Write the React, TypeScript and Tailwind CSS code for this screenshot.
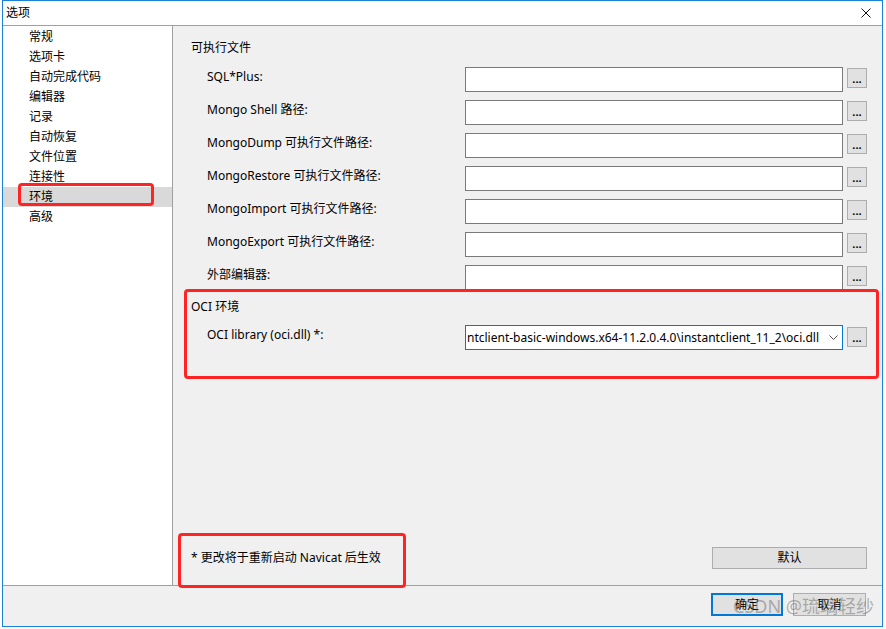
import React from "react";

const labels = [
  "SQL*Plus:",
  "Mongo Shell 路径:",
  "MongoDump 可执行文件路径:",
  "MongoRestore 可执行文件路径:",
  "MongoImport 可执行文件路径:",
  "MongoExport 可执行文件路径:",
  "外部编辑器:",
];

const nav = ["常规", "选项卡", "自动完成代码", "编辑器", "记录", "自动恢复", "文件位置", "连接性", "环境", "高级"];

function DotsButton({ top }: { top: string }) {
  return (
    <div
      className={`w-[20px] h-[20px] ${top} bg-[#e1e1e1] border border-[#adadad] flex items-end justify-center pb-[3px] text-[11px] leading-none font-bold text-black`}
    >
      ...
    </div>
  );
}

export default function App() {
  return (
    <div className="relative w-[886px] h-[629px] bg-white pl-[2px] pr-[3px] pb-[2px] overflow-hidden font-['Noto_Sans','Noto_Sans_CJK_SC',sans-serif] text-[12px] text-black">
      <div className="h-full border border-[#1883d7] flex flex-col">
        {/* title bar */}
        <div className="h-[24px] bg-white flex items-center justify-between border-b border-[#a0a0a0] box-content">
          <span className="pl-[3px] leading-4">选项</span>
          <svg width="10" height="10" viewBox="0 0 10 10" className="mr-[11px]">
            <path d="M0.5 0.5 L9.5 9.5 M9.5 0.5 L0.5 9.5" stroke="#111" strokeWidth="1" />
          </svg>
        </div>

        {/* main */}
        <div className="flex-1 flex border-b border-[#a0a0a0] min-h-0">
          <div className="w-[170px] bg-white border-r border-[#a0a0a0] pt-[1px]">
            {nav.map((n) => (
              <div
                key={n}
                className={`h-[20px] leading-[20px] pl-[26px] ${n === "环境" ? "bg-[#d9d9d9]" : ""}`}
              >
                {n}
              </div>
            ))}
          </div>

          <div className="flex-1 bg-[#f0f0f0] flex flex-col pt-[14px] pr-[15px] pb-[16px]">
            <div className="pl-[18px] h-4 leading-4">可执行文件</div>
            <div className="mt-[11px] flex flex-col">
              {labels.map((l) => (
                <div key={l} className="h-[33px] flex items-start pl-[34px]">
                  <div className="w-[258px] mt-[2px] h-4 leading-4 whitespace-nowrap">{l}</div>
                  <div className="w-[378px] h-[25px] bg-white border border-[#7a7a7a]" />
                  <div className="ml-[4px]">
                    <DotsButton top="mt-[1px]" />
                  </div>
                </div>
              ))}
            </div>

            <div className="mt-[1px] pl-[18px] h-4 leading-4">OCI 环境</div>
            <div className="mt-[10px] flex items-start pl-[34px]">
              <div className="w-[258px] mt-[2px] h-4 leading-4 whitespace-nowrap">OCI library (oci.dll) *:</div>
              <div className="w-[378px] h-[25px] bg-white border border-[#0078d7] flex items-center">
                <div className="flex-1 overflow-hidden whitespace-nowrap pl-[1px] leading-4">
                  ntclient-basic-windows.x64-11.2.0.4.0\instantclient_11_2\oci.dll
                </div>
                <div className="w-[17px] h-full flex items-center justify-center">
                  <svg width="9" height="5" viewBox="0 0 9 5">
                    <path d="M0.5 0.5 L4.5 4.5 L8.5 0.5" stroke="#555" strokeWidth="1" fill="none" />
                  </svg>
                </div>
              </div>
              <div className="ml-[4px]">
                <DotsButton top="mt-[2px]" />
              </div>
            </div>

            <div className="flex-1" />

            <div className="flex items-center justify-between">
              <div className="pl-[18px] leading-4">* 更改将于重新启动 Navicat 后生效</div>
              <div className="w-[155px] h-[22px] bg-[#e1e1e1] border border-[#adadad] flex items-center justify-center">
                默认
              </div>
            </div>
          </div>
        </div>

        {/* bottom bar */}
        <div className="h-[40px] bg-[#f0f0f0] flex justify-end items-start pt-[7px] pr-[16px] gap-[10px]">
          <div className="w-[72px] h-[23px] bg-[#e1e1e1] border-2 border-[#0078d7] flex items-center justify-center">
            确定
          </div>
          <div className="w-[73px] h-[23px] bg-[#e1e1e1] border border-[#adadad] flex items-center justify-center">
            取消
          </div>
        </div>
      </div>

      {/* annotations */}
      <div className="absolute left-[18px] top-[183px] w-[136px] h-[23px] border-[3px] border-[#ff2424] rounded-[4px]" />
      <div className="absolute left-[184px] top-[289px] w-[695px] h-[90px] border-[3px] border-[#ff2424] rounded-[4px]" />
      <div className="absolute left-[178px] top-[533px] w-[228px] h-[55px] border-[3px] border-[#ff2424] rounded-[4px]" />

      <div className="absolute left-[733px] top-[595px] text-[18px] leading-[22px] text-[rgba(110,110,110,0.5)] whitespace-nowrap">
        CSDN @琉璃轻纱
      </div>
    </div>
  );
}
